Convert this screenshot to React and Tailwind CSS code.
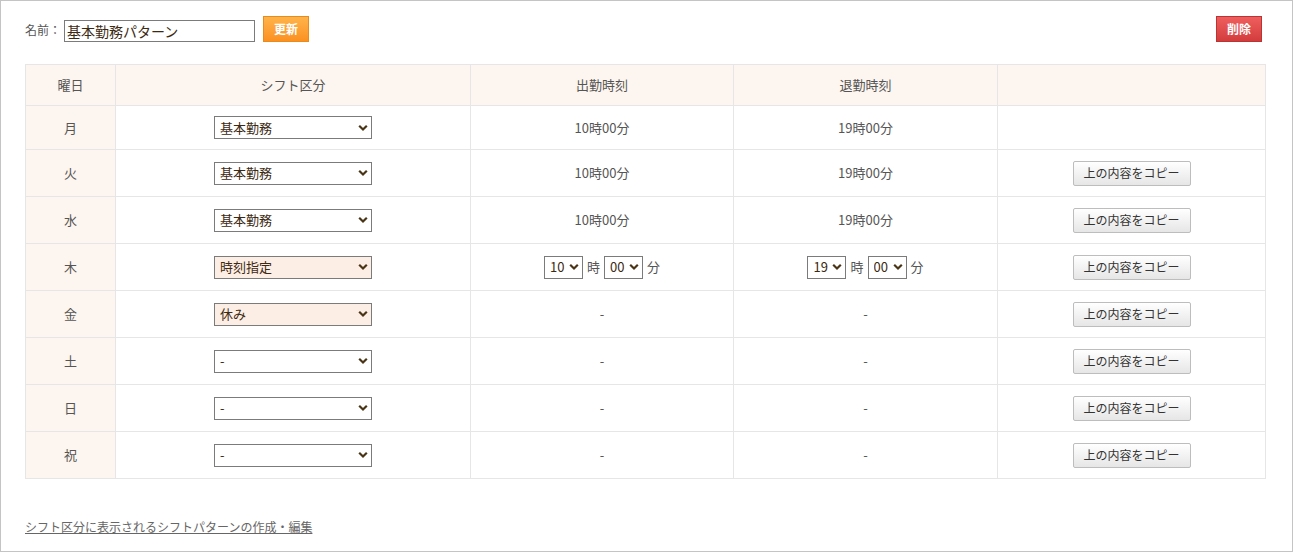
import React from 'react';

const font = { fontFamily: '"Noto Sans CJK JP", "Noto Sans", sans-serif' };

const Chevron = () => (
  <svg className="pointer-events-none absolute right-[4px] top-1/2 -translate-y-1/2" width="10" height="7" viewBox="0 0 10 7">
    <path d="M1.2 1.2 L5 5 L8.8 1.2" fill="none" stroke="#4a3416" strokeWidth="2.2" />
  </svg>
);

const Select = ({ value, hl, className }) => (
  <div className={`relative inline-block ${className}`}>
    <select
      defaultValue={value}
      className={`appearance-none w-full h-full border border-[#7b7b7b] pl-[5px] pr-4 text-[13px] text-[#3d2a12] outline-none ${hl ? 'bg-[#fdeee5]' : 'bg-white'}`}
    >
      <option>{value}</option>
    </select>
    <Chevron />
  </div>
);

const TimeSel = ({ h }) => (
  <div className="flex items-center justify-center gap-[4px] text-[13px] text-[#555]">
    <Select value={h} className="w-[39px] h-[23px]" />
    <span>時</span>
    <Select value="00" className="w-[39px] h-[23px]" />
    <span>分</span>
  </div>
);

const CopyBtn = () => (
  <button className="w-[118px] h-[25px] border border-[#bdbdbd] bg-gradient-to-b from-white to-[#e6e6e6] text-[12px] text-[#333] rounded-[2px]">
    上の内容をコピー
  </button>
);

const rows = [
  { d: '月', s: '基本勤務', a: '10時00分', b: '19時00分', copy: false },
  { d: '火', s: '基本勤務', a: '10時00分', b: '19時00分', copy: true },
  { d: '水', s: '基本勤務', a: '10時00分', b: '19時00分', copy: true },
  { d: '木', s: '時刻指定', hl: true, time: true, copy: true },
  { d: '金', s: '休み', hl: true, a: '-', b: '-', copy: true },
  { d: '土', s: '-', a: '-', b: '-', copy: true },
  { d: '日', s: '-', a: '-', b: '-', copy: true },
  { d: '祝', s: '-', a: '-', b: '-', copy: true },
];

const td = 'border border-[#e6e6e6] text-center align-middle';

export default function App() {
  return (
    <div style={font} className="w-[1293px] h-[552px] border border-[#c4c4c4] bg-white px-[24px] pt-[14px] text-[#555]">
      <div className="flex items-center justify-between h-[28px]">
        <div className="flex items-center">
          <span className="text-[12px] text-[#555] mr-[3px] mt-[2px]">名前：</span>
          <input
            defaultValue="基本勤務パターン"
            className="w-[191px] h-[22px] border border-[#7b7b7b] px-[2px] text-[14px] text-[#3d2a12] outline-none mt-[4px]"
          />
          <button className="ml-[8px] w-[46px] h-[26px] border border-[#e98a1c] bg-gradient-to-b from-[#ffb349] to-[#fb9120] text-white text-[12px] font-bold">
            更新
          </button>
        </div>
        <button className="mr-[6px] w-[46px] h-[26px] border border-[#bb3434] bg-gradient-to-b from-[#ef5e5e] to-[#d33c3c] text-white text-[12px] font-bold">
          削除
        </button>
      </div>

      <table className="mt-[21px] w-[1240px] border-collapse text-[13px] text-[#555] table-fixed">
        <colgroup>
          <col className="w-[90px]" />
          <col className="w-[355px]" />
          <col className="w-[263px]" />
          <col className="w-[264px]" />
          <col className="w-[268px]" />
        </colgroup>
        <thead>
          <tr className="h-[41px] bg-[#fdf5ef]">
            <th className={`${td} font-normal`}>曜日</th>
            <th className={`${td} font-normal`}>シフト区分</th>
            <th className={`${td} font-normal`}>出勤時刻</th>
            <th className={`${td} font-normal`}>退勤時刻</th>
            <th className={`${td} font-normal`}></th>
          </tr>
        </thead>
        <tbody>
          {rows.map((r, i) => (
            <tr key={r.d} className={i === 0 ? 'h-[44px]' : 'h-[47px]'}>
              <td className={`${td} bg-[#fdf5ef]`}>{r.d}</td>
              <td className={td}>
                <Select value={r.s} hl={r.hl} className="w-[158px] h-[23px] align-middle" />
              </td>
              <td className={td}>{r.time ? <TimeSel h="10" /> : r.a}</td>
              <td className={td}>{r.time ? <TimeSel h="19" /> : r.b}</td>
              <td className={td}>{r.copy && <CopyBtn />}</td>
            </tr>
          ))}
        </tbody>
      </table>

      <div className="mt-[34px]">
        <a href="#" className="text-[12px] text-[#666] underline">
          シフト区分に表示されるシフトパターンの作成・編集
        </a>
      </div>
    </div>
  );
}
